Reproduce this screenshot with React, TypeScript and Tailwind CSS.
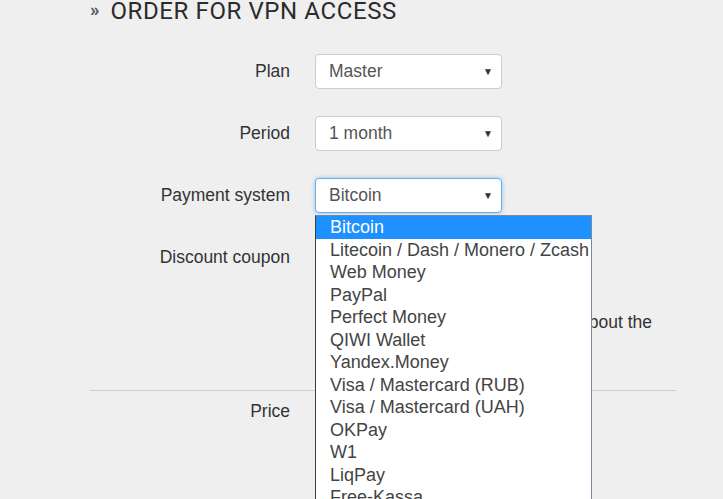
import React from 'react';

const paymentSystems = [
  'Bitcoin',
  'Litecoin / Dash / Monero / Zcash',
  'Web Money',
  'PayPal',
  'Perfect Money',
  'QIWI Wallet',
  'Yandex.Money',
  'Visa / Mastercard (RUB)',
  'Visa / Mastercard (UAH)',
  'OKPay',
  'W1',
  'LiqPay',
  'Free-Kassa',
];

const FakeSelect: React.FC<{ value: string; focused?: boolean }> = ({ value, focused }) => (
  <div
    className={`flex h-[35px] w-[187px] items-center justify-between rounded-[4px] border bg-white pl-[13px] pr-[8px] text-[17.5px] text-[#555] ${
      focused ? 'border-[#66afe9] shadow-[0_0_4px_rgba(102,175,233,0.7)]' : 'border-[#ccc]'
    }`}
  >
    <span>{value}</span>
    <span className="text-[10px] text-[#333]">▼</span>
  </div>
);

const Row: React.FC<{ label: string; children?: React.ReactNode }> = ({ label, children }) => (
  <div className="flex items-center gap-[25px]">
    <div className="w-[200px] text-right text-[17.5px] text-[#333]">{label}</div>
    {children}
  </div>
);

export default function App() {
  return (
    <div
      className="h-[499px] w-[723px] overflow-hidden bg-[#efefef]"
      style={{ fontFamily: '"Liberation Sans", Arial, sans-serif' }}
    >
      <div className="pl-[90px]">
        {/* Title */}
        <h2
          className="flex h-[21px] items-center gap-[11px] text-[24px] leading-none text-[#2b2b2b]"
          style={{ fontFamily: 'Roboto, sans-serif' }}
        >
          <span className="mb-[3px] text-[19px] font-bold text-[#555]">»</span>
          <span className="mt-[1px] tracking-[0.6px]">ORDER FOR VPN ACCESS</span>
        </h2>

        <div className="mt-[33px] flex flex-col gap-[27px]">
          <Row label="Plan">
            <FakeSelect value="Master" />
          </Row>
          <Row label="Period">
            <FakeSelect value="1 month" />
          </Row>
          <Row label="Payment system">
            <div className="relative">
              <FakeSelect value="Bitcoin" focused />
              {/* open list */}
              <ul className="absolute left-0 top-[37px] z-10 w-[277px] border border-[#7a8ba0] border-l-[#3c3c3c] bg-white text-[18px] leading-[22.5px] text-[#444]">
                {paymentSystems.map((p, i) => (
                  <li
                    key={p}
                    className={`whitespace-nowrap pl-[14px] ${i === 0 ? 'bg-[#1e90ff] text-white' : ''}`}
                  >
                    {p}
                  </li>
                ))}
              </ul>
            </div>
          </Row>
          <Row label="Discount coupon">
            <div className="h-[35px] w-[187px] rounded-[4px] border border-[#ccc] bg-white" />
          </Row>
        </div>

        <div className="ml-[225px] mt-[36px] text-[17.5px] leading-[22px] text-[#333]">
          <p className="w-[337px] text-right">Read the information about the</p>
          <p>&nbsp;</p>
        </div>

        <hr className="mr-[47px] mt-[35px] border-t border-[#cfcfcf]" />

        <div className="mt-[7px]">
          <Row label="Price" />
        </div>
      </div>
    </div>
  );
}
